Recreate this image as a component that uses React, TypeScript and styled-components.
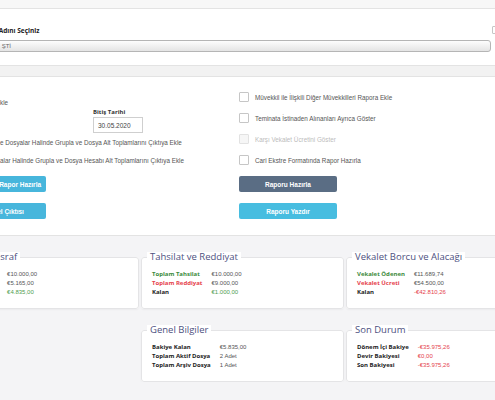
import styled, { createGlobalStyle } from 'styled-components';

const GlobalStyle = createGlobalStyle`
  html, body {
    margin: 0;
    padding: 0;
    background: #f4f4f6;
    overflow: hidden;
  }
  body {
    font-family: 'Liberation Sans', Arial, sans-serif;
  }
  * { box-sizing: border-box; }
`;

const green = '#3b8a3b';
const red = '#e5414c';

// the screenshot is a crop of a wider page, so the page is shifted left
const Page = styled.div`
  width: 600px;
  margin-left: -80px;
`;

// start of a text that falls outside the crop; fixed width, overflow to the left
const Lead = styled.span<{ $w: number }>`
  display: inline-flex;
  justify-content: flex-end;
  width: ${p => p.$w}px;
  overflow: hidden;
  vertical-align: bottom;
`;

const TopStrip = styled.div`
  height: 9px;
  background: #f7f7f7;
  border-bottom: 1px solid #e3e3e3;
`;

const TopPanel = styled.div`
  background: #fff;
  padding: 17px 20px 13px 28px;
  display: flex;
  flex-direction: column;
  gap: 6px;
`;

const LabelRow = styled.div`
  display: flex;
  justify-content: space-between;
  align-items: center;
  height: 8px;
`;

const FieldLabel = styled.span`
  font: 700 6.5px 'Open Sans', sans-serif;
  color: #222;
  white-space: nowrap;
`;

const Box = styled.span<{ $size?: number; $disabled?: boolean }>`
  display: inline-block;
  flex: none;
  width: ${p => p.$size ?? 10}px;
  height: ${p => p.$size ?? 10}px;
  border: 1px solid ${p => (p.$disabled ? '#e2e2e2' : '#c6c6c6')};
  background: ${p => (p.$disabled ? '#f6f6f6' : '#fff')};
  border-radius: 1px;
`;

const SelectBox = styled.div`
  height: 12px;
  margin-right: 9px;
  border: 1px solid #b5b5b5;
  border-radius: 3px;
  background: linear-gradient(#fdfdfd, #e4e4e4);
  font-size: 6px;
  line-height: 10px;
  color: #666;
  padding-left: 6px;
  white-space: nowrap;
`;

const SectionBar = styled.div`
  height: 12px;
  background: #f2f2f2;
  border-top: 1px solid #e3e3e3;
  border-bottom: 1px solid #e3e3e3;
`;

const OptionsPanel = styled.div`
  background: #fff;
  border-bottom: 1px solid #e3e3e3;
  height: 159px;
  padding-left: 28px;
  display: grid;
  grid-template-columns: 291px 1fr;
  align-items: start;
`;

const Column = styled.div<{ $top: number; $gap?: number }>`
  display: flex;
  flex-direction: column;
  align-items: flex-start;
  padding-top: ${p => p.$top}px;
  gap: ${p => p.$gap ?? 0}px;
`;

const CheckRow = styled.label<{ $mt?: number; $disabled?: boolean }>`
  display: flex;
  align-items: center;
  gap: 6px;
  height: 10px;
  margin-top: ${p => p.$mt ?? 0}px;
  font-size: 6.3px;
  color: ${p => (p.$disabled ? '#bcbcbc' : '#555')};
  white-space: nowrap;
`;

const DateRow = styled.div<{ $mt?: number }>`
  display: grid;
  grid-template-columns: 145px 50px;
  margin-top: ${p => p.$mt ?? 0}px;
`;

const DateGroup = styled.div`
  display: flex;
  flex-direction: column;
  gap: 2px;
`;

const DateLabel = styled.span`
  font: 700 6px/6px 'Open Sans', sans-serif;
  color: #333;
  white-space: nowrap;
`;

const DateInput = styled.div`
  width: 50px;
  height: 16px;
  border: 1px solid #cfcfcf;
  display: flex;
  align-items: center;
  padding-left: 4px;
  font-size: 6.5px;
  color: #444;
`;

const Button = styled.button<{ $bg: string; $mt?: number }>`
  width: 98px;
  height: 16px;
  margin-top: ${p => p.$mt ?? 0}px;
  border: none;
  border-radius: 2px;
  background: ${p => p.$bg};
  color: #fff;
  font: 700 6.5px 'Liberation Sans', Arial, sans-serif;
  padding: 0;
  white-space: nowrap;
  display: flex;
  justify-content: center;
  align-items: center;
`;

const CardsArea = styled.div`
  padding: 16px 0 0 16px;
  display: grid;
  grid-template-columns: repeat(3, 203px);
  column-gap: 2px;
  row-gap: 16px;
`;

const Card = styled.fieldset<{ $col?: number }>`
  grid-column-start: ${p => p.$col ?? 'auto'};
  margin: 0;
  min-width: 0;
  padding: 8px 10px 11px;
  background: #fff;
  border: 1px solid #e4e4e6;
  border-radius: 3px;
  box-shadow: 0 1px 2px rgba(0, 0, 0, 0.04);
`;

const CardTitle = styled.legend`
  margin-left: -5px;
  padding: 0 3px;
  background: #fff;
  font: 400 9.5px/10px 'Open Sans', sans-serif;
  color: #4d5080;
  white-space: nowrap;
`;

const Rows = styled.div`
  display: grid;
  grid-template-columns: auto auto;
  justify-content: start;
  column-gap: 9px;
  line-height: 9px;
`;

const RowLabel = styled.span<{ $color?: string }>`
  font: 700 6px/9px 'Open Sans', sans-serif;
  color: ${p => p.$color ?? '#222'};
  white-space: nowrap;
`;

const RowValue = styled.span<{ $color?: string }>`
  font: 400 6px/9px 'Liberation Sans', Arial, sans-serif;
  color: ${p => p.$color ?? '#555'};
  white-space: nowrap;
`;

type Row = { label: string; value: string; labelColor?: string; valueColor?: string };

const cards: { title: string; col?: number; rows: Row[] }[] = [
  {
    title: 'Avans ve Masraf',
    rows: [
      { label: 'Toplam Harcama', value: '€10.000,00' },
      { label: 'Tahsil Edilen', value: '€5.165,00' },
      { label: 'Kalan', value: '€4.835,00', valueColor: '#4f9d4f' },
    ],
  },
  {
    title: 'Tahsilat ve Reddiyat',
    rows: [
      { label: 'Toplam Tahsilat', value: '€10.000,00', labelColor: green },
      { label: 'Toplam Reddiyat', value: '€9.000,00', labelColor: red },
      { label: 'Kalan', value: '€1.000,00', valueColor: '#4f9d4f' },
    ],
  },
  {
    title: 'Vekalet Borcu ve Alacağı',
    rows: [
      { label: 'Vekalet Ödenen', value: '€11.689,74', labelColor: green },
      { label: 'Vekalet Ücreti', value: '€54.500,00', labelColor: red },
      { label: 'Kalan', value: '-€42.810,26', valueColor: red },
    ],
  },
  {
    title: 'Genel Bilgiler',
    col: 2,
    rows: [
      { label: 'Bakiye Kalan', value: '€5.835,00' },
      { label: 'Toplam Aktif Dosya', value: '2 Adet' },
      { label: 'Toplam Arşiv Dosya', value: '1 Adet' },
    ],
  },
  {
    title: 'Son Durum',
    rows: [
      { label: 'Dönem İçi Bakiye', value: '-€35.975,26', valueColor: red },
      { label: 'Devir Bakiyesi', value: '€0,00', valueColor: red },
      { label: 'Son Bakiyesi', value: '-€35.975,26', valueColor: red },
    ],
  },
];

const rightOptions = [
  { text: 'Müvekkil ile İlişkili Diğer Müvekkilleri Rapora Ekle' },
  { text: 'Teminata İstinaden Alınanları Ayrıca Göster' },
  { text: 'Karşı Vekalet Ücretini Göster', disabled: true },
  { text: 'Cari Ekstre Formatında Rapor Hazırla' },
];

export default function App() {
  return (
    <>
      <GlobalStyle />
      <Page>
        <TopStrip />
        <TopPanel>
          <LabelRow>
            <FieldLabel>
              <Lead $w={49}>Lütfen Müşteri</Lead> Adını Seçiniz
            </FieldLabel>
            <Box $size={8} />
          </LabelRow>
          <SelectBox>
            <Lead $w={45}>ABCD TİC. LTD.</Lead> ŞTİ
          </SelectBox>
        </TopPanel>
        <SectionBar />

        <OptionsPanel>
          <Column $top={20}>
            <CheckRow>
              <Box />
              <span>
                <Lead $w={36}>Giderleri E</Lead>kle
              </span>
            </CheckRow>
            <DateRow $mt={2}>
              <DateGroup>
                <DateLabel>Başlangıç Tarihi</DateLabel>
                <DateInput>01.01.2020</DateInput>
              </DateGroup>
              <DateGroup>
                <DateLabel>Bitiş Tarihi</DateLabel>
                <DateInput>30.05.2020</DateInput>
              </DateGroup>
            </DateRow>
            <CheckRow $mt={4}>
              <Box />
              <span>
                <Lead $w={36}>Borçlulara Gör</Lead>e Dosyalar Halinde Grupla ve Dosya Alt Toplamlarını Çıktıya Ekle
              </span>
            </CheckRow>
            <CheckRow $mt={8}>
              <Box />
              <span>
                <Lead $w={36}>Hepsini Dosy</Lead>alar Halinde Grupla ve Dosya Hesabı Alt Toplamlarını Çıktıya Ekle
              </span>
            </CheckRow>
            <Button $bg="#47b6dc" $mt={11}>Müvekkil Bazlı Rapor Hazırla</Button>
            <Button $bg="#47b6dc" $mt={11}>Tüm Excel Çıktısı</Button>
          </Column>

          <Column $top={15} $gap={11}>
            {rightOptions.map(o => (
              <CheckRow key={o.text} $disabled={o.disabled}>
                <Box $disabled={o.disabled} />
                {o.text}
              </CheckRow>
            ))}
            <Button $bg="#5a6d84">Raporu Hazırla</Button>
            <Button $bg="#47bde0">Raporu Yazdır</Button>
          </Column>
        </OptionsPanel>

        <CardsArea>
          {cards.map(c => (
            <Card key={c.title} $col={c.col}>
              <CardTitle>{c.title}</CardTitle>
              <Rows>
                {c.rows.flatMap(r => [
                  <RowLabel key={r.label} $color={r.labelColor}>{r.label}</RowLabel>,
                  <RowValue key={r.label + '-v'} $color={r.valueColor}>{r.value}</RowValue>,
                ])}
              </Rows>
            </Card>
          ))}
        </CardsArea>
      </Page>
    </>
  );
}
